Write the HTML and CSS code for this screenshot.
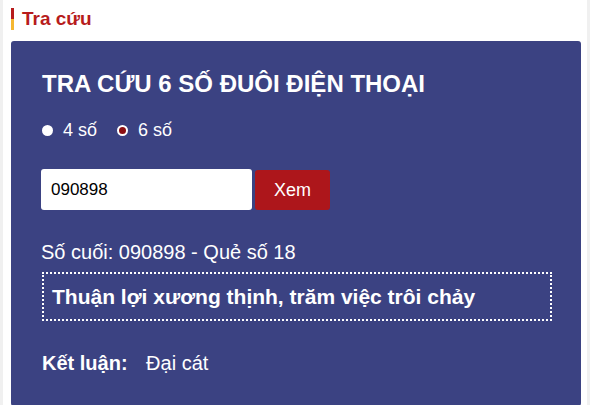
FILE: index.html
```html
<html>

<head>
  <meta charset="utf8">
  <title>Tra cứu</title>
  <link rel="stylesheet" href="styles.css">
</head>

<body>
  <div class="page">
    <h3 class="block-title">Tra cứu</h3>
    <section class="lookup">
      <h2>TRA CỨU 6 SỐ ĐUÔI ĐIỆN THOẠI</h2>
      <div class="choices">
        <label><span class="radio"></span>4 số</label>
        <label><span class="radio checked"></span>6 số</label>
      </div>
      <form class="search">
        <input type="text" value="090898">
        <button type="button">Xem</button>
      </form>
      <p class="summary">Số cuối: 090898 - Quẻ số 18</p>
      <div class="meaning">Thuận lợi xương thịnh, trăm việc trôi chảy</div>
      <p class="verdict"><b>Kết luận:</b> Đại cát</p>
    </section>
  </div>
</body>

</html>
```

FILE: styles.css
```css
body {
  margin: 0;
  background: #fff;
  font-family: "Liberation Sans", Arial, sans-serif;
  overflow: hidden;
}

.page {
  height: 405px;
  box-sizing: border-box;
  border-left: 3px solid #f0f0f0;
  border-right: 3px solid #f0f0f0;
  padding: 8px 6px 0 8px;
}

.block-title {
  margin: 0 0 11px;
  padding-left: 8px;
  border-left: 3px solid #b71c1c;
  border-image: linear-gradient(#b71c1c 50%, #f5b731 50%) 1;
  color: #b71c1c;
  font-size: 19px;
  line-height: 22px;
}

.lookup {
  background: #3b4282;
  color: #fff;
  border-radius: 3px;
  padding: 27px 30px 32px 31px;
}

.lookup h2 {
  margin: 0;
  font-size: 24px;
  line-height: 32px;
}

.choices {
  display: flex;
  gap: 20px;
  margin-top: 20px;
  font-size: 18px;
  line-height: 20px;
}

.choices label {
  display: flex;
  align-items: center;
  gap: 10px;
}

.radio {
  width: 11px;
  height: 11px;
  border-radius: 50%;
  background: #fff;
  box-sizing: border-box;
}

.radio.checked {
  background: #8b0e12;
  border: 2px solid #fff;
}

.search {
  display: flex;
  gap: 3px;
  margin: 29px 0 0 -1px;
}

.search input {
  width: 211px;
  height: 41px;
  box-sizing: border-box;
  border: 0;
  border-radius: 3px;
  padding: 0 10px;
  font: 17px "Liberation Sans", Arial, sans-serif;
  color: #000;
}

.search button {
  width: 75px;
  height: 40px;
  margin-top: 1px;
  border: 0;
  border-radius: 3px;
  background: #ad161b;
  color: #fff;
  font: 18px "Liberation Sans", Arial, sans-serif;
}

.summary {
  margin: 30px 0 0 -1px;
  font-size: 20px;
  line-height: 24px;
}

.meaning {
  margin-top: 8px;
  width: 510px;
  box-sizing: border-box;
  border: 2px dotted #fff;
  padding: 10px 8px;
  font-size: 21px;
  font-weight: bold;
  line-height: 25px;
}

.verdict {
  margin: 31px 0 0;
  font-size: 20px;
  line-height: 22px;
}

.verdict b {
  margin-right: 13px;
}
```
